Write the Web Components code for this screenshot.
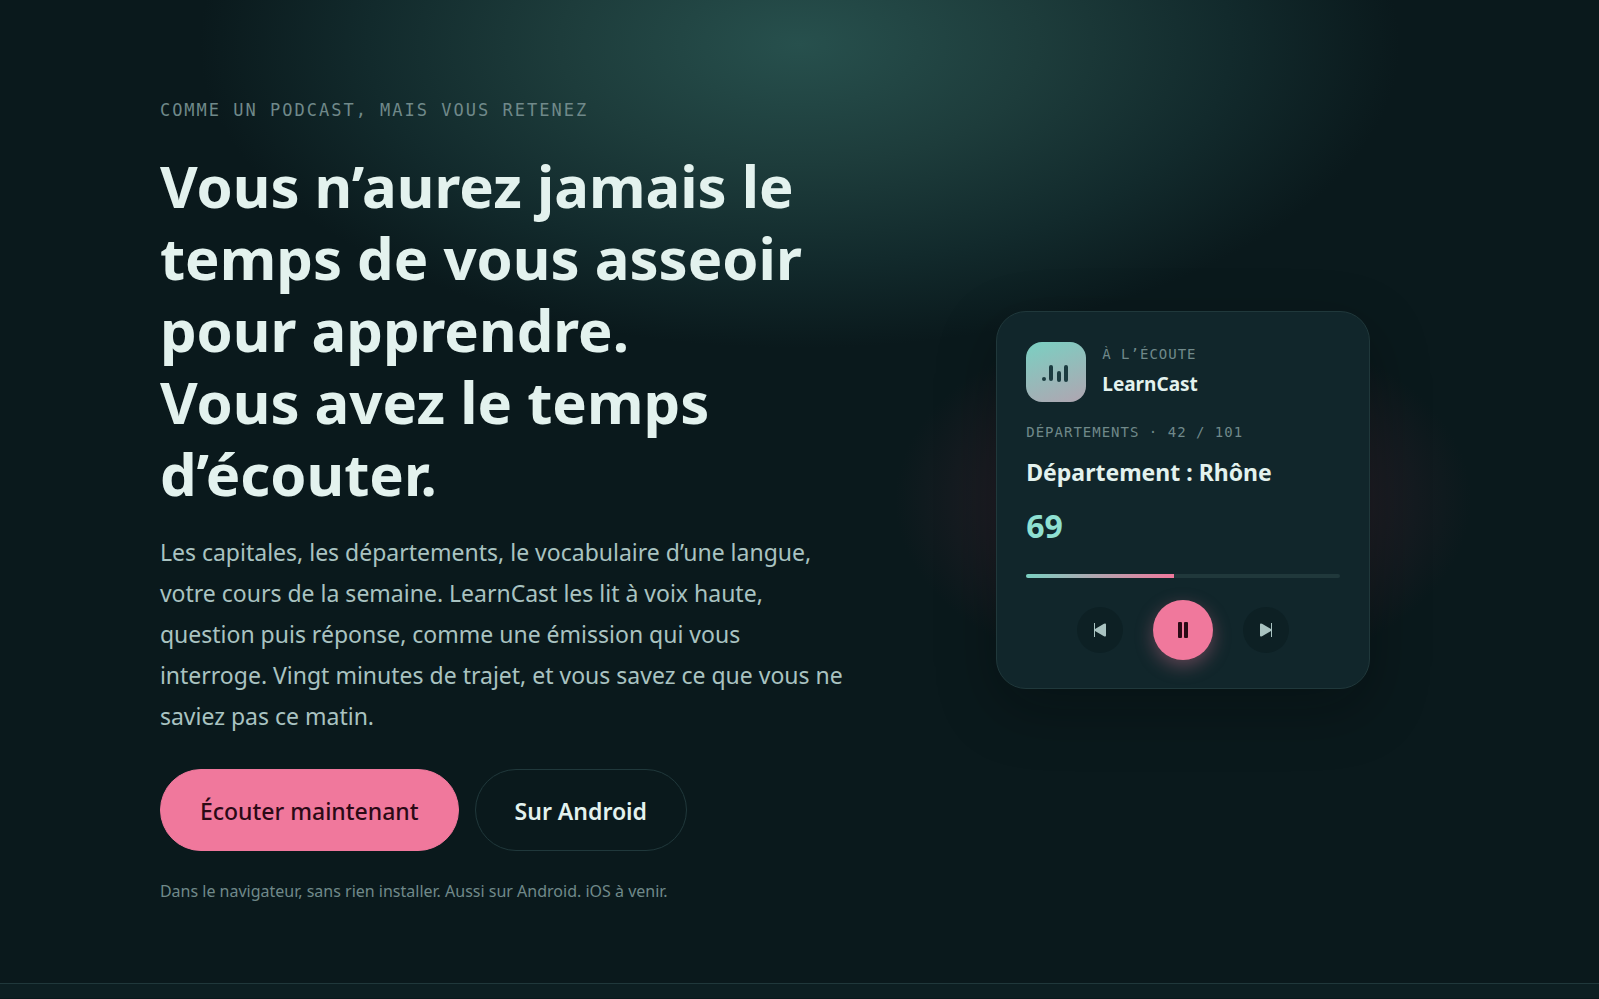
<!DOCTYPE html>
<html lang="fr">
<head>
<meta charset="utf-8">
<meta name="viewport" content="width=device-width, initial-scale=1">
<title>LearnCast</title>
<style>
    :root {
        --bg: #0a191c;
        --surface: #11262b;
        --band: #0d1f22;
        --line: #20383b;
        --text: #e3f2ee;
        --soft: #a9c3c1;
        --muted: #70898a;
        --mint: #7ad0c2;
        --pink: #f0789c;
        --mono: "DejaVu Sans Mono", monospace;
    }
    * { box-sizing: border-box; }
    body {
        margin: 0;
        min-height: 100vh;
        background: var(--bg);
        color: var(--text);
        font-family: "Noto Sans", "Open Sans", sans-serif;
    }
</style>
</head>
<body>
<landing-hero>
    <span slot="eyebrow">Comme un podcast, mais vous retenez</span>
    <span slot="title">Vous n’aurez jamais le temps de vous asseoir pour apprendre.<br>Vous avez le temps d’écouter.</span>
    <span slot="lead">Les capitales, les départements, le vocabulaire d’une langue, votre cours de la semaine. LearnCast les lit à voix haute, question puis réponse, comme une émission qui vous interroge. Vingt minutes de trajet, et vous savez ce que vous ne saviez pas ce matin.</span>
    <pill-link slot="actions" href="#ecouter" variant="primary">Écouter maintenant</pill-link>
    <pill-link slot="actions" href="#android">Sur Android</pill-link>
    <span slot="note">Dans le navigateur, sans rien installer. Aussi sur Android. iOS à venir.</span>
    <player-card slot="visual" progress="47">
        <span slot="status">À l’écoute</span>
        <span slot="name">LearnCast</span>
        <span slot="deck">Départements · 42 / 101</span>
        <span slot="question">Département : Rhône</span>
        <span slot="answer">69</span>
    </player-card>
</landing-hero>
<page-band></page-band>

<script>
class LandingHero extends HTMLElement {

    constructor() {
        super();
        this.attachShadow({mode: "open"});
    }

    connectedCallback() {
        this.shadowRoot.innerHTML = `
        <style>
            * { box-sizing: border-box; }
            :host {
                display: block;
                padding: 96px 10% 80px;
                background: radial-gradient(600px 304px at 50% 44px, #27504d, #1d3c3b 40%, #122a2c 72%, transparent);
            }
            .grid {
                display: grid;
                grid-template-columns: minmax(0, 11fr) minmax(0, 8fr);
                gap: 64px;
                align-items: center;
            }
            .eyebrow {
                margin: 0 0 26px;
                color: var(--muted);
                font: 17px/28px var(--mono);
                letter-spacing: 2px;
                text-transform: uppercase;
            }
            h1 {
                margin: 0 0 22px;
                font-size: 58px;
                line-height: 72px;
                font-weight: 700;
            }
            .lead {
                max-width: 690px;
                margin: 0 0 32px;
                color: var(--soft);
                font-size: 23px;
                line-height: 41px;
            }
            .actions {
                display: flex;
                flex-wrap: wrap;
                gap: 16px;
            }
            .note {
                margin: 28px 0 0;
                color: var(--muted);
                font-size: 16px;
                line-height: 24px;
            }
            .visual {
                display: flex;
                justify-content: center;
                margin: 0 -32px;
                background: radial-gradient(288px 184px, #35262e, #1e1d24 62%, transparent);
            }
            @media screen and (max-width: 1100px) {
                .grid { grid-template-columns: minmax(0, 1fr); }
                h1 { font-size: 40px; line-height: 48px; }
            }
        </style>
        <section class="grid">
            <div class="copy">
                <p class="eyebrow"><slot name="eyebrow"></slot></p>
                <h1><slot name="title"></slot></h1>
                <p class="lead"><slot name="lead"></slot></p>
                <div class="actions"><slot name="actions"></slot></div>
                <p class="note"><slot name="note"></slot></p>
            </div>
            <div class="visual"><slot name="visual"></slot></div>
        </section>
        `;
    }
}

class PillLink extends HTMLElement {

    constructor() {
        super();
        this.attachShadow({mode: "open"});
    }

    connectedCallback() {
        this.shadowRoot.innerHTML = `
        <style>
            :host { display: block; }
            a {
                display: block;
                padding: 21px 39px 19px;
                border: 1px solid var(--line);
                border-radius: 41px;
                color: var(--text);
                font-size: 23px;
                line-height: 40px;
                font-weight: 600;
                text-decoration: none;
            }
            :host([variant="primary"]) a {
                border-color: var(--pink);
                background: var(--pink);
                color: #2b0a16;
                font-weight: 500;
            }
        </style>
        <a href="${this.getAttribute("href")}"><slot></slot></a>
        `;
    }
}

class PlayerCard extends HTMLElement {

    constructor() {
        super();
        this.attachShadow({mode: "open"});
    }

    connectedCallback() {
        this.shadowRoot.innerHTML = `
        <style>
            * { box-sizing: border-box; }
            :host {
                display: block;
                width: 374px;
                padding: 30px 29px 28px;
                border: 1px solid var(--line);
                border-radius: 30px;
                background: var(--surface);
                box-shadow: 0 20px 60px rgba(0, 8, 8, 0.3);
            }
            p { margin: 0; }
            header {
                display: flex;
                align-items: center;
                gap: 16px;
            }
            .logo {
                display: block;
                width: 60px;
                height: 60px;
                border-radius: 16px;
                background: linear-gradient(160deg, var(--mint), #b0a5b1);
            }
            .label {
                color: var(--muted);
                font: 14px/24px var(--mono);
                letter-spacing: 1px;
                text-transform: uppercase;
            }
            .name {
                font-size: 19px;
                line-height: 36px;
                font-weight: 700;
            }
            .deck { margin-top: 18px; }
            .question {
                margin-top: 10px;
                font-size: 23px;
                line-height: 36px;
                font-weight: 700;
            }
            .answer {
                margin-top: 12px;
                color: #8fe0d2;
                font-size: 32px;
                line-height: 48px;
                font-weight: 700;
            }
            .track {
                height: 4px;
                margin: 24px 0 22px;
                border-radius: 2px;
                background: var(--line);
            }
            .bar {
                height: 4px;
                border-radius: 2px 0 0 2px;
                background: linear-gradient(90deg, var(--mint), var(--pink));
            }
            .controls {
                display: flex;
                align-items: center;
                justify-content: center;
                gap: 30px;
            }
            button {
                display: grid;
                place-items: center;
                width: 46px;
                height: 46px;
                padding: 0;
                border: 0;
                border-radius: 50%;
                background: #0d2024;
                color: var(--soft);
            }
            .main {
                width: 60px;
                height: 60px;
                background: var(--pink);
                color: #2b0a16;
                box-shadow: 0 6px 18px rgba(242, 122, 158, 0.35);
            }
        </style>
        <header>
            <svg class="logo" viewBox="0 0 60 60" aria-hidden="true">
                <g fill="#1b3b40">
                    <rect x="16" y="35" width="4" height="4" rx="2"/>
                    <rect x="23" y="23" width="4" height="16" rx="2"/>
                    <rect x="31" y="29" width="4" height="11" rx="2"/>
                    <rect x="38" y="23" width="4" height="17" rx="2"/>
                </g>
            </svg>
            <div>
                <p class="label"><slot name="status"></slot></p>
                <p class="name"><slot name="name"></slot></p>
            </div>
        </header>
        <p class="label deck"><slot name="deck"></slot></p>
        <p class="question"><slot name="question"></slot></p>
        <p class="answer"><slot name="answer"></slot></p>
        <div class="track"><div class="bar" style="width: ${this.getAttribute("progress")}%"></div></div>
        <div class="controls">
            <button type="button" aria-label="Précédent">
                <svg width="12" height="14" viewBox="0 0 12 14" fill="currentColor"><path d="M0 0h1v6L10 .8Q12 0 12 1.500V12.500Q12 14 10 13.200L1 8V14H0z"/></svg>
            </button>
            <button type="button" class="main" aria-label="Pause">
                <svg width="10" height="16" viewBox="0 0 10 16" fill="currentColor"><rect width="4" height="16" rx="1"/><rect x="6" width="4" height="16" rx="1"/></svg>
            </button>
            <button type="button" aria-label="Suivant">
                <svg width="12" height="14" viewBox="0 0 12 14" fill="currentColor"><path d="M12 0h-1v6L2 .8Q0 0 0 1.500V12.500Q0 14 2 13.200L11 8V14h1z"/></svg>
            </button>
        </div>
        `;
    }
}

class PageBand extends HTMLElement {

    constructor() {
        super();
        this.attachShadow({mode: "open"});
        this.shadowRoot.innerHTML = `
        <style>
            :host {
                display: block;
                height: 15px;
                border-top: 1px solid var(--line);
                background: var(--band);
            }
        </style>
        <slot></slot>
        `;
    }
}

customElements.define("landing-hero", LandingHero);
customElements.define("pill-link", PillLink);
customElements.define("player-card", PlayerCard);
customElements.define("page-band", PageBand);
</script>
</body>
</html>
